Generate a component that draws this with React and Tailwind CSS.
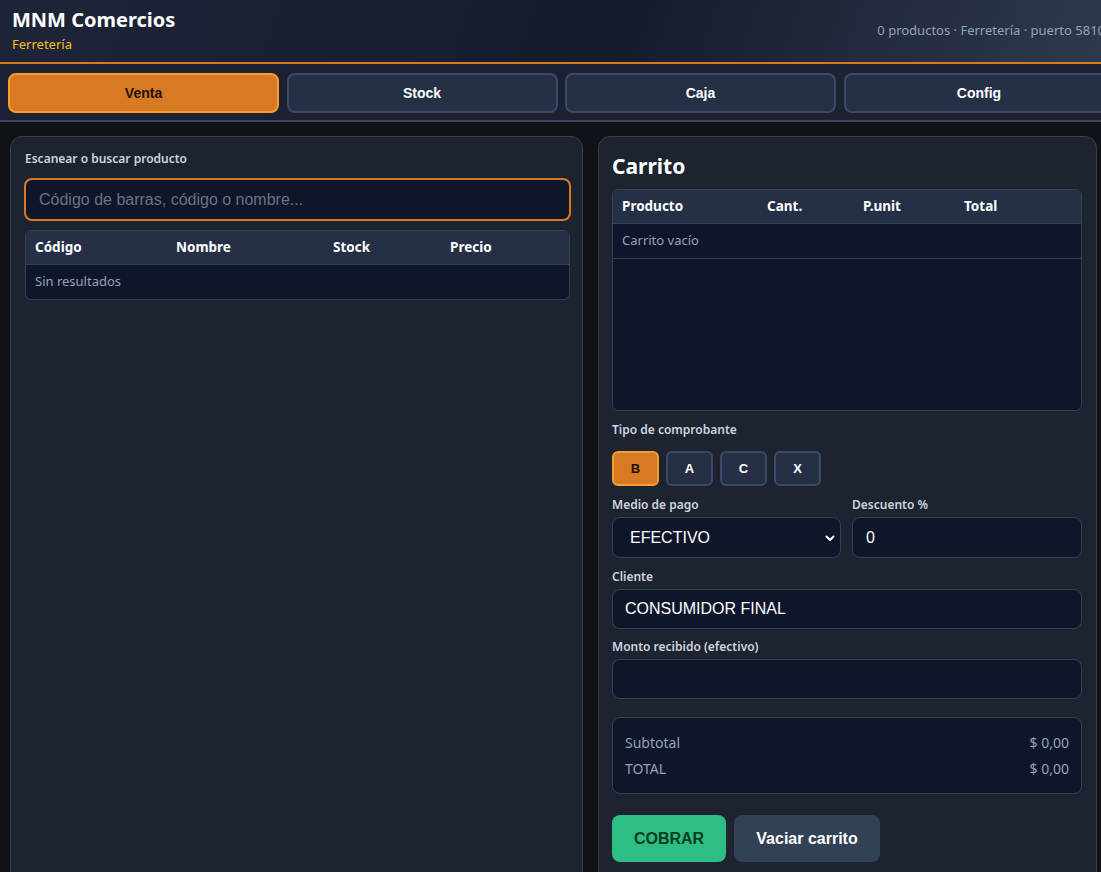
import React from "react";

const ui = { fontFamily: '"Noto Sans", "Open Sans", sans-serif' };
const ar = { fontFamily: '"Liberation Sans", Arial, sans-serif' };

function Tab({ label, active }) {
  return (
    <button
      style={ar}
      className={
        "h-[40px] w-[271px] shrink-0 rounded-lg border-2 text-[14px] font-bold " +
        (active
          ? "bg-[#d87a23] border-[#f5a02e] text-[#1a1208]"
          : "bg-[#253047] border-[#3b4a6b] text-white")
      }
    >
      {label}
    </button>
  );
}

function TipoBtn({ label, active }) {
  return (
    <button
      style={ar}
      className={
        "h-[35px] w-[47px] rounded-md border-2 text-[13px] font-bold " +
        (active
          ? "bg-[#d87a23] border-[#f5a02e] text-[#1a1208]"
          : "bg-[#253047] border-[#3b4a6b] text-white")
      }
    >
      {label}
    </button>
  );
}

export default function App() {
  return (
    <div className="w-[1120px] min-h-[872px] bg-[#0f1318] overflow-hidden" style={ui}>
      {/* Header */}
      <header className="h-[64px] border-b-2 border-[#d87a23] bg-[linear-gradient(110deg,#1e2538_0%,#161b2c_55%,#2f3a4e_100%)] flex items-start justify-between pl-[12px] pr-[15px]">
        <div className="pt-[5px]">
          <div className="text-[20px] font-bold text-white leading-[29px]">MNM Comercios</div>
          <div className="text-[13px] text-[#fbbf24] leading-[18px] mt-[1px]">Ferretería</div>
        </div>
        <div className="pt-[21px] text-[13px] text-[#94a3b8] whitespace-nowrap">0 productos · Ferretería · puerto 5810</div>
      </header>

      {/* Tabs */}
      <nav className="h-[58px] bg-[#1c2232] border-b-2 border-[#3b4560] flex gap-[7.5px] px-[8px] pt-[9px]">
        <Tab label="Venta" active />
        <Tab label="Stock" />
        <Tab label="Caja" />
        <Tab label="Config" />
      </nav>

      {/* Main */}
      <main className="grid grid-cols-[573px_499px] gap-[15px] pl-[10px] pt-[14px]">
        {/* Left panel */}
        <section className="h-[760px] rounded-xl border border-[#334155] bg-[#1e2330] pl-[13px] pr-[11px] pt-[14px]">
          <div className="text-[12px] font-semibold text-[#cbd5e1] leading-[16px] pl-[1px]">Escanear o buscar producto</div>
          <div
            style={ar}
            className="mt-[11px] h-[43px] rounded-lg border-2 border-[#d87a23] bg-[#10162a] flex items-center px-[13px] text-[16px] text-[#6b7280]"
          >
            Código de barras, código o nombre...
          </div>
          <div className="mt-[9px] mx-[1px] rounded-md border border-[#334155] overflow-hidden bg-[#10162a]">
            <div className="grid grid-cols-[141px_157px_117px_1fr] h-[34px] items-center bg-[#253047] border-b border-[#334155] text-[13.5px] font-bold text-white">
              <div className="pl-[9px]">Código</div>
              <div className="pl-[9px]">Nombre</div>
              <div className="pl-[9px]">Stock</div>
              <div className="pl-[9px]">Precio</div>
            </div>
            <div className="h-[34px] flex items-center pl-[9px] text-[13px] text-[#94a3b8]">Sin resultados</div>
          </div>
        </section>

        {/* Right panel */}
        <section className="h-[760px] rounded-xl border border-[#334155] bg-[#1e2330] pl-[13px] pr-[14px] pt-[14px]">
          <h2 className="text-[21px] font-bold text-white leading-[30px]">Carrito</h2>
          <div className="mt-[8px] h-[222px] rounded-md border border-[#334155] overflow-hidden bg-[#10162a]">
            <div className="grid grid-cols-[145px_96px_101px_1fr] h-[34px] items-center bg-[#253047] border-b border-[#334155] text-[13.5px] font-bold text-white">
              <div className="pl-[9px]">Producto</div>
              <div className="pl-[9px]">Cant.</div>
              <div className="pl-[9px]">P.unit</div>
              <div className="pl-[9px]">Total</div>
            </div>
            <div className="h-[35px] flex items-center pl-[9px] text-[13px] text-[#94a3b8] border-b border-[#334155]">Carrito vacío</div>
          </div>

          <div className="mt-[11px] text-[12px] font-semibold text-[#cbd5e1] leading-[16px]">Tipo de comprobante</div>
          <div className="mt-[13px] flex gap-[7px]">
            <TipoBtn label="B" active />
            <TipoBtn label="A" />
            <TipoBtn label="C" />
            <TipoBtn label="X" />
          </div>

          <div className="mt-[11px] grid grid-cols-[229px_1fr] gap-[11px]">
            <div>
              <div className="text-[12px] font-semibold text-[#cbd5e1] leading-[16px]">Medio de pago</div>
              <div
                style={ar}
                className="mt-[4px] h-[41px] rounded-lg border border-[#334155] bg-[#10162a] flex items-center justify-between pl-[17px] pr-[4px] text-[16px] text-white"
              >
                <span>EFECTIVO</span>
                <svg width="12" height="12" viewBox="0 0 12 12" fill="none" stroke="white" strokeWidth="2" strokeLinecap="round" strokeLinejoin="round">
                  <path d="M2.5 4.5 L6 8 L9.5 4.5" />
                </svg>
              </div>
            </div>
            <div>
              <div className="text-[12px] font-semibold text-[#cbd5e1] leading-[16px]">Descuento %</div>
              <div
                style={ar}
                className="mt-[4px] h-[41px] rounded-lg border border-[#334155] bg-[#10162a] flex items-center pl-[13px] text-[16px] text-white"
              >
                0
              </div>
            </div>
          </div>

          <div className="mt-[11px] text-[12px] font-semibold text-[#cbd5e1] leading-[16px]">Cliente</div>
          <div
            style={ar}
            className="mt-[4px] h-[40px] rounded-lg border border-[#334155] bg-[#10162a] flex items-center pl-[12px] text-[16px] text-white"
          >
            CONSUMIDOR FINAL
          </div>

          <div className="mt-[10px] text-[12px] font-semibold text-[#cbd5e1] leading-[16px]">Monto recibido (efectivo)</div>
          <div className="mt-[4px] h-[40px] rounded-lg border border-[#334155] bg-[#10162a]" />

          <div className="mt-[18px] h-[77px] rounded-lg border border-[#334155] bg-[#10162a] px-[12px] pt-[15px] text-[14px] text-[#94a3b8]">
            <div className="flex justify-between leading-[20px]">
              <span>Subtotal</span>
              <span>$ 0,00</span>
            </div>
            <div className="flex justify-between leading-[20px] mt-[6px]">
              <span>TOTAL</span>
              <span>$ 0,00</span>
            </div>
          </div>

          <div className="mt-[21px] flex gap-[8px]" style={ar}>
            <button className="h-[47px] w-[114px] rounded-lg bg-[#2ebd85] text-[16px] font-bold text-[#073d22]">COBRAR</button>
            <button className="h-[47px] w-[146px] rounded-lg bg-[#334155] text-[16px] font-bold text-white">Vaciar carrito</button>
          </div>
        </section>
      </main>
    </div>
  );
}
